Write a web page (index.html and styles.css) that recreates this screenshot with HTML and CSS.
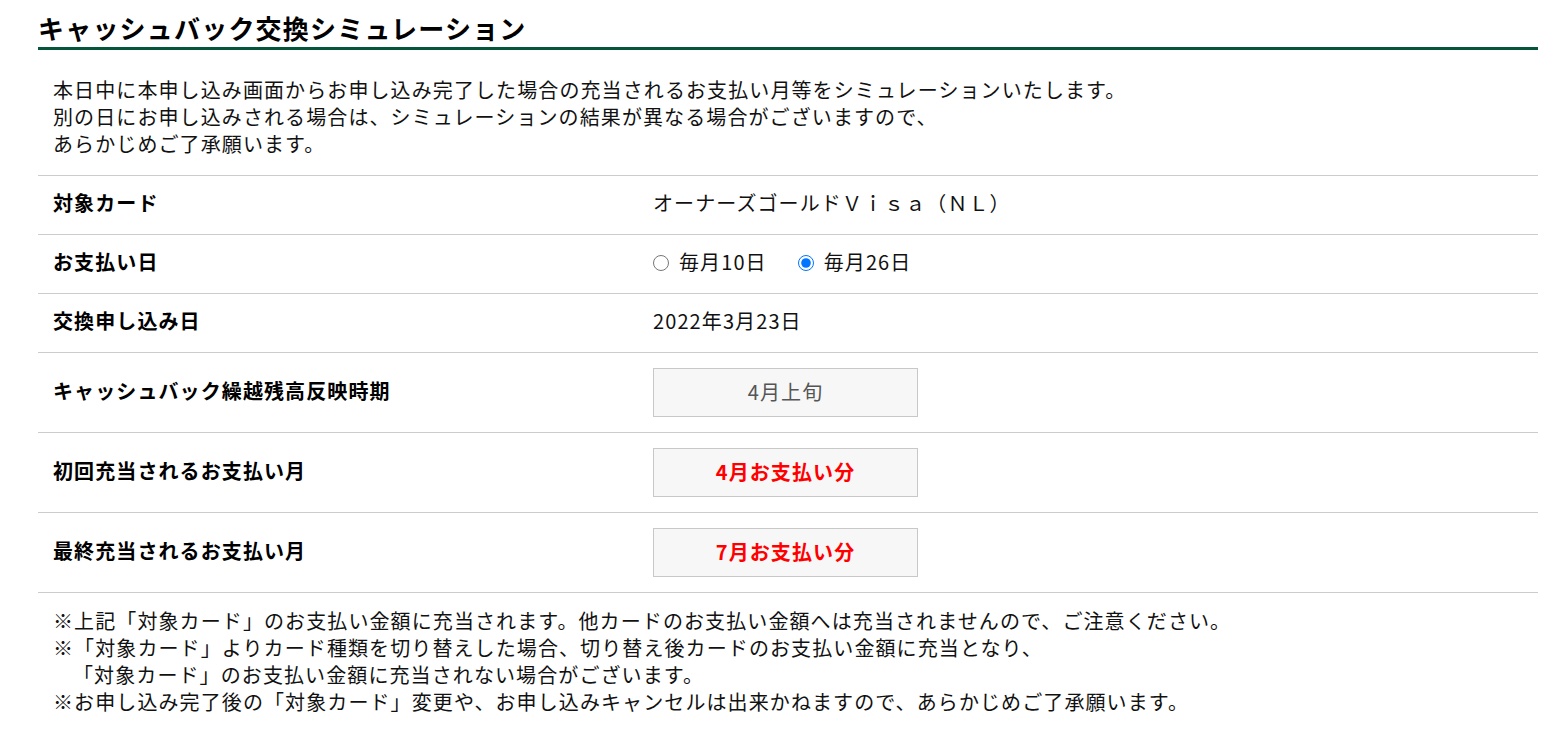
FILE: index.html
```html
<!DOCTYPE html>
<html lang="ja">
<head>
<meta charset="utf-8">
<title>キャッシュバック交換シミュレーション</title>
<link rel="stylesheet" href="styles.css">
</head>
<body>
<div class="wrap">
  <h1 class="title">キャッシュバック交換シミュレーション</h1>
  <p class="intro">本日中に本申し込み画面からお申し込み完了した場合の充当されるお支払い月等をシミュレーションいたします。<br>別の日にお申し込みされる場合は、シミュレーションの結果が異なる場合がございますので、<br>あらかじめご了承願います。</p>
  <div class="table">
    <div class="row">
      <div class="label">対象カード</div>
      <div class="value">オーナーズゴールドＶｉｓａ（ＮＬ）</div>
    </div>
    <div class="row">
      <div class="label">お支払い日</div>
      <div class="value radios">
        <label class="radio"><input type="radio" name="pay">毎月10日</label>
        <label class="radio"><input type="radio" name="pay" checked>毎月26日</label>
      </div>
    </div>
    <div class="row">
      <div class="label">交換申し込み日</div>
      <div class="value">2022年3月23日</div>
    </div>
    <div class="row tall">
      <div class="label">キャッシュバック繰越残高反映時期</div>
      <div class="value"><div class="box grey">4月上旬</div></div>
    </div>
    <div class="row tall">
      <div class="label">初回充当されるお支払い月</div>
      <div class="value"><div class="box red">4月お支払い分</div></div>
    </div>
    <div class="row tall">
      <div class="label">最終充当されるお支払い月</div>
      <div class="value"><div class="box red">7月お支払い分</div></div>
    </div>
  </div>
  <div class="notes">
    <p class="note">※上記「対象カード」のお支払い金額に充当されます。他カードのお支払い金額へは充当されませんので、ご注意ください。</p>
    <p class="note">※「対象カード」よりカード種類を切り替えした場合、切り替え後カードのお支払い金額に充当となり、<br>「対象カード」のお支払い金額に充当されない場合がございます。</p>
    <p class="note">※お申し込み完了後の「対象カード」変更や、お申し込みキャンセルは出来かねますので、あらかじめご了承願います。</p>
  </div>
</div>
</body>
</html>
```

FILE: styles.css
```css
* { box-sizing: border-box; }
html, body { margin: 0; padding: 0; background: #fff; }
body {
  font-family: "Noto Sans CJK JP", "Noto Sans", sans-serif;
  color: #111;
  font-size: 20px;
  letter-spacing: 1.1px;
}
.wrap {
  width: 1500px;
  margin-left: 38px;
}
.title {
  margin: 9px 0 0 0;
  font-size: 26px;
  letter-spacing: 1.2px;
  line-height: 38px;
  font-weight: 700;
  color: #000;
  border-bottom: 3px solid #04553a;
}
.intro {
  margin: 26px 0 18px 0;
  padding-left: 15px;
  line-height: 27px;
}
.table {
  border-bottom: 1px solid #ccc;
}
.row {
  display: flex;
  align-items: center;
  border-top: 1px solid #ccc;
  min-height: 59px;
}
.row.tall { min-height: 80px; }
.label {
  width: 615px;
  flex: none;
  padding-left: 15px;
  padding-bottom: 5px;
  font-weight: 700;
  color: #000;
}
.value { flex: 1; padding-bottom: 5px; }
.row.tall .value { padding-bottom: 0; }
.radios { display: flex; gap: 31px; }
.radio { display: flex; align-items: center; }
.radio input { margin: 2px 10px 0 0; width: 16px; height: 16px; }
.box {
  width: 265px;
  height: 49px;
  border: 1px solid #c8c8c8;
  background: #f7f7f7;
  display: flex;
  align-items: center;
  justify-content: center;
  padding-bottom: 3px;
}
.box.grey { color: #555; }
.box.red { color: #f00; font-weight: 700; }
.notes {
  margin-top: 14px;
  padding-left: 15px;
}
.note {
  margin: 0;
  line-height: 27px;
  padding-left: 1em;
  text-indent: -1em;
}
```
